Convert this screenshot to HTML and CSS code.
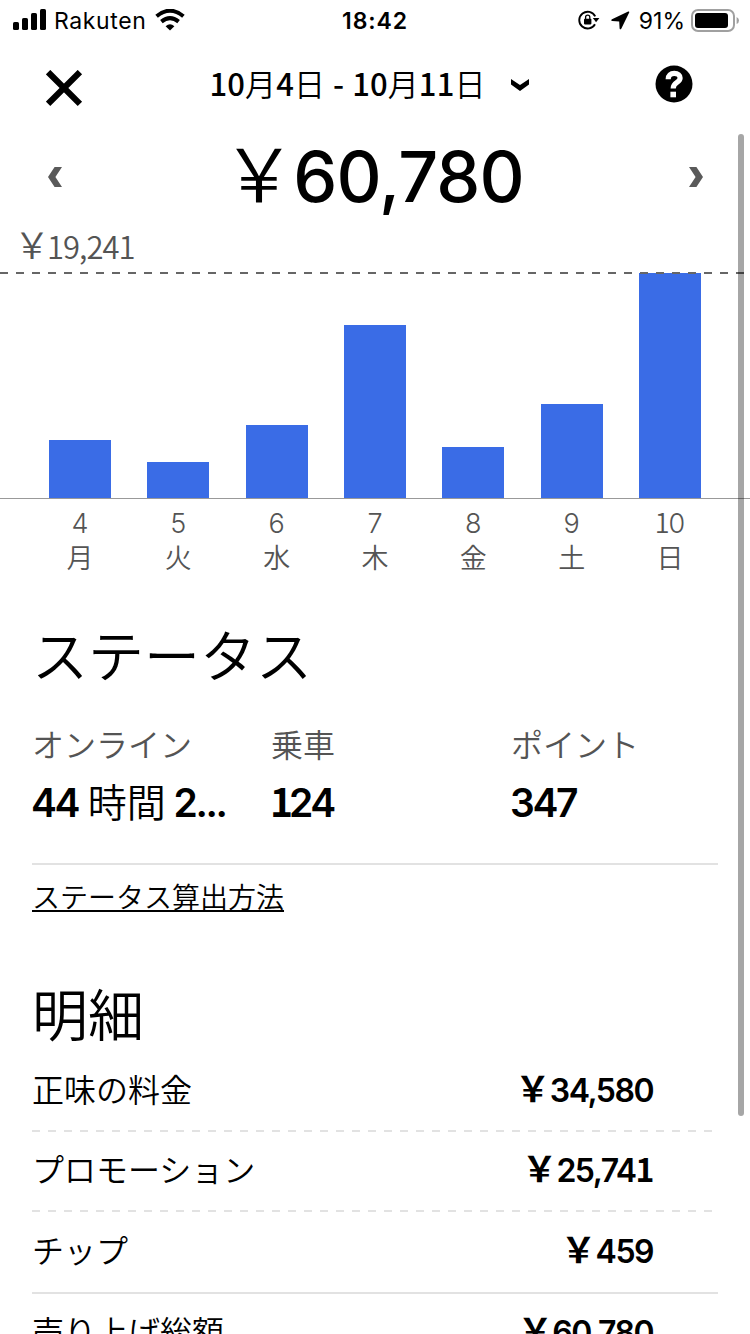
FILE: index.html
```html
<!DOCTYPE html>
<html lang="ja">
<head>
    <meta charset="UTF-8">
    <meta name="viewport" content="width=device-width, initial-scale=1.0">
    <title>売り上げ</title>
    <link rel="stylesheet" href="styles.css">
</head>
<body>
    <!-- ステータスバー -->
    <div class="status-bar">
        <div class="status-left">
            <svg class="icon-signal" width="33" height="22" viewBox="0 0 33 22">
                <rect x="0" y="13" width="6" height="8" rx="1.6"/>
                <rect x="9" y="9" width="6" height="12" rx="1.6"/>
                <rect x="18" y="4" width="6" height="17" rx="1.6"/>
                <rect x="27" y="0" width="6" height="21" rx="1.6"/>
            </svg>
            <span class="carrier">Rakuten</span>
            <svg class="icon-wifi" width="30" height="22" viewBox="0 0 30 22">
                <path d="M1.6 7.2 Q15 -3.8 28.4 7.2" fill="none" stroke="#000" stroke-width="4"/>
                <path d="M6.4 12.6 Q15 5.6 23.6 12.6" fill="none" stroke="#000" stroke-width="4"/>
                <path d="M10.6 17.2 Q15 13.4 19.4 17.2 L15 21.6 Z"/>
            </svg>
        </div>
        <div class="status-time">18:42</div>
        <div class="status-right">
            <svg class="icon-lock" width="22" height="20" viewBox="0 0 22 20">
                <path d="M17.2 6.4 A8.4 8.4 0 1 0 17 14.2" fill="none" stroke="#000" stroke-width="1.9"/>
                <path d="M14.8 8 h6.6 l-3.3 4.2 z"/>
                <rect x="6" y="8.8" width="7.4" height="5.6" rx=".8"/>
                <path d="M7.6 9 V7.2 a2.1 2.1 0 0 1 4.2 0 V9" fill="none" stroke="#000" stroke-width="1.3"/>
            </svg>
            <svg class="icon-location" width="19" height="19" viewBox="0 0 19 19">
                <path d="M17.2 .5 L1 8.2 Q-.6 9.6 1.2 10 L8.2 10.4 L8.6 17.4 Q9.2 19.2 10.4 17.4 L18.2 1.6 Q18.6 0 17.2 .5 Z"/>
            </svg>
            <span class="battery-text">91%</span>
            <svg class="icon-battery" width="48" height="23" viewBox="0 0 48 23">
                <rect x="1" y="1" width="42" height="21" rx="6" fill="none" stroke="#a0a0a0" stroke-width="2"/>
                <rect x="4" y="4" width="33" height="15" rx="3"/>
                <path d="M45.6 8 Q48 9 48 11.5 Q48 14 45.6 15 Z" fill="#a0a0a0"/>
            </svg>
        </div>
    </div>

    <!-- ヘッダー -->
    <div class="header">
        <svg class="icon-close" width="38" height="38" viewBox="0 0 38 38">
            <path d="M2.1 2.1 L33.9 33.9 M33.9 2.1 L2.1 33.9" stroke="#000" stroke-width="6.2"/>
        </svg>
        <div class="period">
            <span class="period-text"><b>10</b>月<b>4</b>日<b class="hyphen">-</b><b>10</b>月<b>11</b>日</span>
            <svg class="icon-down" width="20" height="14" viewBox="0 0 20 14">
                <path d="M1 1 L10 7 L19 1 V6.6 L10 13 L1 6.6 Z"/>
            </svg>
        </div>
        <svg class="icon-help" width="38" height="38" viewBox="0 0 38 38">
            <circle cx="19" cy="19" r="18.5"/>
            <path d="M13.2 14.2 C13.2 10.3 15.5 8.4 19.3 8.4 C23 8.4 25.1 10.4 25.1 13 C25.1 18 18.2 17 18.2 23.4" fill="none" stroke="#fff" stroke-width="5.2"/>
            <rect x="15.4" y="26.7" width="5.6" height="5.6" fill="#fff"/>
        </svg>
    </div>

    <!-- 合計金額 -->
    <div class="total">
        <svg class="icon-prev" width="14" height="20" viewBox="0 0 14 20">
            <path d="M6.6 0 H14 L7.4 10 L14 20 H6.6 L0 10 Z"/>
        </svg>
        <div class="total-price"><span class="yen">&#xFFE5;</span>60,780</div>
        <svg class="icon-next" width="14" height="20" viewBox="0 0 14 20">
            <path d="M7.4 0 H0 L6.6 10 L0 20 H7.4 L14 10 Z"/>
        </svg>
    </div>

    <!-- グラフ -->
    <div class="chart">
        <div class="chart-max"><span class="yen">&#xFFE5;</span>19,241</div>
        <div class="bars">
            <div class="bar" style="height: 58.5px"></div>
            <div class="bar" style="height: 36.5px"></div>
            <div class="bar" style="height: 72.7px"></div>
            <div class="bar" style="height: 173.5px"></div>
            <div class="bar" style="height: 50.6px"></div>
            <div class="bar" style="height: 94px"></div>
            <div class="bar" style="height: 225px"></div>
        </div>
        <div class="days">
            <div class="day"><span class="num">4</span><span>月</span></div>
            <div class="day"><span class="num">5</span><span>火</span></div>
            <div class="day"><span class="num">6</span><span>水</span></div>
            <div class="day"><span class="num">7</span><span>木</span></div>
            <div class="day"><span class="num">8</span><span>金</span></div>
            <div class="day"><span class="num">9</span><span>土</span></div>
            <div class="day"><span class="num"><span class="one">1</span>0</span><span>日</span></div>
        </div>
    </div>

    <!-- ステータス -->
    <div class="section">
        <h2>ステータス</h2>
        <div class="stats">
            <div class="stat">
                <div class="stat-label">オンライン</div>
                <div class="stat-value"><b>44</b> 時間 <b>2...</b></div>
            </div>
            <div class="stat">
                <div class="stat-label">乗車</div>
                <div class="stat-value"><b><span class="one">1</span>24</b></div>
            </div>
            <div class="stat">
                <div class="stat-label">ポイント</div>
                <div class="stat-value"><b>347</b></div>
            </div>
        </div>
        <a class="link" href="#">ステータス算出方法</a>
    </div>

    <!-- 明細 -->
    <div class="section detail">
        <h2>明細</h2>
        <div class="row">
            <span class="row-label">正味の料金</span>
            <span class="row-price"><span class="yen">&#xFFE5;</span>34,580</span>
        </div>
        <div class="row">
            <span class="row-label">プロモーション</span>
            <span class="row-price"><span class="yen">&#xFFE5;</span>25,74<span class="one">1</span></span>
        </div>
        <div class="row row-last">
            <span class="row-label">チップ</span>
            <span class="row-price"><span class="yen">&#xFFE5;</span>459</span>
        </div>
        <div class="row row-sum">
            <span class="row-label">売り上げ総額</span>
            <span class="row-price"><span class="yen">&#xFFE5;</span>60,780</span>
        </div>
    </div>

    <div class="scrollbar"></div>
</body>
</html>
```

FILE: styles.css
```css
* { box-sizing: border-box; }
body { margin: 0; width: 750px; height: 1334px; overflow: hidden; position: relative; background: #fff; color: #000; font-family: "Noto Sans CJK JP", sans-serif; font-weight: 350; }
svg { display: block; flex: none; }
b { font-weight: 500; }
.yen, .one { font-family: "Noto Sans CJK JP", sans-serif; line-height: 1; }

/* ステータスバー */
.status-bar { display: grid; grid-template-columns: 1fr auto 1fr; height: 40px; align-items: center; font-family: Inter, sans-serif; font-size: 23px; font-weight: 400; line-height: 38px; }
.status-left { display: flex; align-items: center; padding-left: 13px; }
.carrier { margin-left: 8px; padding-top: 2px; letter-spacing: 0.6px; }
.icon-wifi { margin-left: 9px; }
.status-time { padding-top: 2px; font-weight: 600; letter-spacing: 0.9px; }
.status-right { display: flex; align-items: center; justify-content: flex-end; padding-right: 11px; }
.icon-location { margin-left: 11px; }
.battery-text { margin-left: 9px; padding-top: 2px; }
.icon-battery { margin-left: 6px; }

/* ヘッダー */
.header { display: flex; height: 90px; padding: 25px 57px 0 46px; align-items: flex-start; justify-content: space-between; }
.icon-close { margin-top: 5px; }
.period { display: flex; align-items: center; height: 38px; }
.period-text { font-size: 31px; line-height: 38px; padding-bottom: 3px; letter-spacing: 0.1px; white-space: nowrap; }
.hyphen { margin: 0 8px; }
.icon-down { margin-left: 24px; margin-top: 2px; }

/* 合計金額 */
.total { display: flex; height: 94px; padding: 0 47px 0 48px; align-items: center; justify-content: space-between; }
.total svg { fill: #5a5a5a; }
.total-price { font-family: Inter, "Noto Sans CJK JP", sans-serif; font-size: 70px; font-weight: 500; line-height: 92px; padding-left: 3px; letter-spacing: -0.8px; white-space: nowrap; }
.total-price .yen { font-weight: 350; font-size: 74px; margin: 0 -2px 0 -8px; }

/* グラフ */
.chart { position: relative; color: #545454; }
.chart-max { height: 49px; padding-left: 17px; font-size: 31px; line-height: 43px; letter-spacing: -1px; }
.chart-max .yen { font-size: 36px; margin: 0 -2px 0 -3px; }
.bars { display: flex; height: 226px; padding: 0 49px; align-items: flex-end; justify-content: space-between; border-bottom: 1px solid #999; }
.bar { width: 62px; background: #3a6ce6; }
.chart::after { content: ""; position: absolute; top: 48px; left: 0; width: 100%; height: 2px; background: repeating-linear-gradient(90deg, #666 0 8px, transparent 8px 16px); }
.days { display: flex; height: 74px; padding: 8px 49px 0; justify-content: space-between; }
.day { display: flex; flex-direction: column; width: 62px; font-size: 27px; line-height: 33px; text-align: center; }
.num { height: 33px; font-family: Inter, sans-serif; }
.num .one { letter-spacing: -1px; }

/* 各セクション */
.section { padding: 0 32px; }
h2 { margin: 0; font-size: 56px; font-weight: 350; line-height: 80px; }
.section:not(.detail) { padding-top: 40px; }
.stats { display: grid; grid-template-columns: 239px 240px 1fr; height: 172px; padding-top: 27px; border-bottom: 2px solid #e2e2e2; }
.stat-label { font-size: 32px; line-height: 46px; color: #545454; }
.stat-value { font-size: 39px; line-height: 56px; margin-top: 6px; white-space: nowrap; }
.stat-value b { font-family: Inter, sans-serif; font-weight: 600; letter-spacing: -2.4px; margin: 0 1px 0 -1px; }
.stat-value .one { letter-spacing: -4px; }
.link { display: inline-block; font-size: 28px; line-height: 40px; color: #000; margin-top: 11px; }

/* 明細 */
.detail { padding-top: 56px; }
.row { display: flex; height: 80px; justify-content: space-between; align-items: center; padding: 0 65px 8px 0; font-size: 32px; background: repeating-linear-gradient(90deg, #e2e2e2 0 8px, transparent 8px 16px) bottom / 100% 2px no-repeat; }
.row-price { font-family: Inter, "Noto Sans CJK JP", sans-serif; font-weight: 600; padding-top: 2px; letter-spacing: -1.5px; }
.row-price .yen { font-weight: 700; font-size: 35px; margin-right: 1px; }
.row-price .one { font-weight: 700; }
.row-last { height: 82px; background: linear-gradient(#e2e2e2, #e2e2e2) bottom / 100% 2px no-repeat; }
.row-sum { background: none; }

.scrollbar { position: absolute; top: 134px; left: 738px; width: 6px; height: 982px; border-radius: 3px; background: rgba(0, 0, 0, 0.35); }
```
